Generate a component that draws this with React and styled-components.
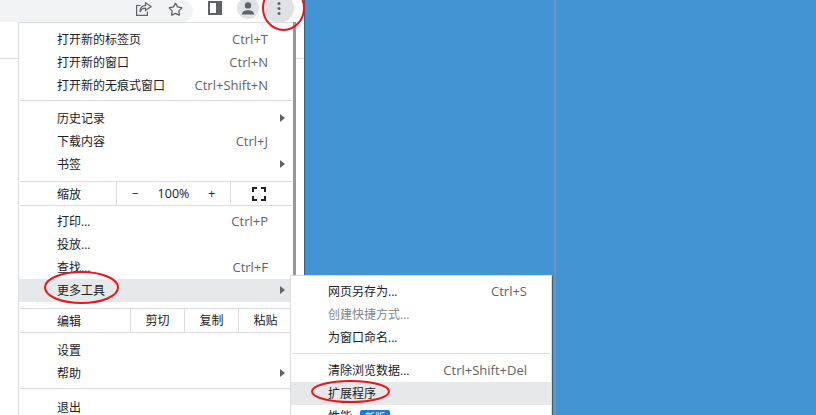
import React from "react";
import styled, { createGlobalStyle } from "styled-components";
import { Star } from "lucide-react";

const GlobalStyle = createGlobalStyle`
  html, body {
    margin: 0;
    padding: 0;
    overflow: hidden;
  }
  body {
    font-family: "Open Sans", "Noto Sans CJK SC", sans-serif;
    font-size: 12px;
    color: #202124;
  }
`;

const Page = styled.div`
  position: relative;
  display: flex;
  width: 816px;
  height: 415px;
  overflow: hidden;
  background: #4394d2;
`;

const BrowserPane = styled.div`
  width: 304px;
  height: 100%;
  flex-shrink: 0;
  background: #fff;
  border-right: 1px solid #3a5f80;
`;

const Toolbar = styled.div`
  display: flex;
  align-items: flex-start;
  height: 58px;
  border-bottom: 1px solid #dadce0;
`;

const Omnibox = styled.div`
  display: flex;
  align-items: center;
  justify-content: flex-end;
  gap: 16px;
  width: 193px;
  height: 22px;
  padding: 0 10px 4px 0;
  box-sizing: border-box;
  background: #f1f3f4;
  border-radius: 0 11px 11px 0;
`;

const ToolIcon = styled.svg`
  display: block;
  flex-shrink: 0;
`;

const ToolButtons = styled.div`
  display: flex;
  align-items: center;
  height: 16px;
  margin-left: 15px;
`;

const SideButton = styled.div`
  margin-right: 15px;
`;

const RoundButton = styled.div`
  display: flex;
  align-items: center;
  justify-content: center;
  flex-shrink: 0;
  width: ${p => p.$size}px;
  height: ${p => p.$size}px;
  margin-right: ${p => p.$gap || 0}px;
  border-radius: 50%;
  background: #dfe1e5;
`;

const BlueArea = styled.div`
  flex: 1;
  display: flex;
`;

const BlueLeft = styled.div`
  width: 249px;
  border-right: 2px solid #6a94b8;
`;

const Menu = styled.div`
  position: absolute;
  left: 18px;
  top: 22px;
  width: 275px;
  height: 400px;
  padding-top: 5px;
  box-sizing: border-box;
  background: #fff;
  border: 1px solid #dadce0;
  border-right: none;
  box-shadow: 3px 0 0 #96989c;
`;

const SubMenu = styled.div`
  position: absolute;
  left: 290px;
  top: 275px;
  width: 262px;
  height: 150px;
  padding-top: 4px;
  box-sizing: border-box;
  background: #fff;
  border: 1px solid #dadce0;
  box-shadow: 1px 1px 0 #3a5f80;
`;

const Row = styled.div`
  display: flex;
  align-items: center;
  justify-content: space-between;
  height: 23px;
  padding: 0 ${p => (p.$inset ? 24 : 25)}px 2px ${p => (p.$inset ? 37 : 38)}px;
  box-sizing: border-box;
  background: ${p => (p.$active ? "#e7e8ea" : "transparent")};
  color: ${p => (p.$muted ? "#80868b" : "#202124")};
  position: relative;
`;

const Shortcut = styled.span`
  color: #5f6368;
  font-size: 13px;
`;

const Caret = styled.span`
  position: absolute;
  right: 8px;
  top: 7px;
  width: 0;
  height: 0;
  border-left: 5px solid #5f6368;
  border-top: 4px solid transparent;
  border-bottom: 4px solid transparent;
`;

const Separator = styled.div`
  height: 1px;
  margin: ${p => p.$before || 0}px 1px ${p => p.$after || 0}px 1px;
  background: #dadce0;
`;

const CellRow = styled.div`
  display: flex;
  align-items: stretch;
  height: 23px;
`;

const CellLabel = styled.div`
  display: flex;
  align-items: center;
  width: ${p => p.$width}px;
  padding-left: 38px;
  box-sizing: border-box;
`;

const Cell = styled.div`
  display: flex;
  align-items: center;
  justify-content: ${p => p.$justify || "center"};
  width: ${p => p.$width}px;
  box-sizing: border-box;
  border-left: 1px solid #dadce0;
  padding: ${p => p.$padding || "0 0 2px"};
`;

const ZoomValue = styled.span`
  font-size: 12.5px;
`;

const Badge = styled.span`
  display: inline-block;
  margin-left: 8px;
  padding: 0 5px;
  height: 15px;
  line-height: 15px;
  font-size: 10px;
  color: #fff;
  background: #1a7ad9;
  border-radius: 2px;
`;

const Oval = styled.svg`
  position: absolute;
  left: ${p => p.$x}px;
  top: ${p => p.$y}px;
  overflow: visible;
  pointer-events: none;
`;

function RedOval({ x, y, w, h }) {
  return (
    <Oval $x={x} $y={y} width={w} height={h}>
      <ellipse cx={w / 2} cy={h / 2} rx={w / 2} ry={h / 2} fill="none" stroke="#e3191f" strokeWidth="2" />
    </Oval>
  );
}

function ShareIcon() {
  return (
    <ToolIcon width="16" height="14" viewBox="0 0 16 14" fill="none" stroke="#5f6368" strokeWidth="1.2">
      <path d="M4.5 3.5H0.6V13.4h10.8V9.5" />
      <path d="M9.5 0.8L15 4.6 9.5 8.4V6.2C7 6.2 5.2 7.2 4 10c0-4 2-6.3 5.5-6.6z" />
    </ToolIcon>
  );
}

function SidePanelIcon() {
  return (
    <ToolIcon width="14" height="14" viewBox="0 0 14 14">
      <rect x="0" y="0" width="14" height="14" fill="#5f6368" />
      <rect x="2" y="2" width="6" height="10" fill="#fff" />
    </ToolIcon>
  );
}

function AvatarIcon() {
  return (
    <ToolIcon width="14" height="13" viewBox="0 0 14 13" fill="#5f6368">
      <circle cx="7" cy="3.4" r="3.2" />
      <path d="M0.8 12.6c0-3 3-4.4 6.2-4.4s6.2 1.4 6.2 4.4z" />
    </ToolIcon>
  );
}

function KebabIcon() {
  return (
    <ToolIcon width="4" height="13" viewBox="0 0 4 13" fill="#5f6368">
      <circle cx="2" cy="1.5" r="1.5" />
      <circle cx="2" cy="6.5" r="1.5" />
      <circle cx="2" cy="11.5" r="1.5" />
    </ToolIcon>
  );
}

function FullscreenIcon() {
  return (
    <ToolIcon width="14" height="14" viewBox="0 0 14 14" fill="none" stroke="#202124" strokeWidth="2">
      <path d="M1 5V1h4M9 1h4v4M13 9v4H9M5 13H1V9" />
    </ToolIcon>
  );
}

export default function App() {
  return (
    <Page>
      <GlobalStyle />
      <BrowserPane>
        <Toolbar>
          <Omnibox>
            <ShareIcon />
            <Star size={15} color="#5f6368" strokeWidth={2} />
          </Omnibox>
          <ToolButtons>
            <SideButton><SidePanelIcon /></SideButton>
            <RoundButton $size={22} $gap={5}><AvatarIcon /></RoundButton>
            <RoundButton $size={30}><KebabIcon /></RoundButton>
          </ToolButtons>
        </Toolbar>
      </BrowserPane>
      <BlueArea>
        <BlueLeft />
      </BlueArea>

      <Menu>
        <Row>打开新的标签页<Shortcut>Ctrl+T</Shortcut></Row>
        <Row>打开新的窗口<Shortcut>Ctrl+N</Shortcut></Row>
        <Row>打开新的无痕式窗口<Shortcut>Ctrl+Shift+N</Shortcut></Row>
        <Separator $before={3} $after={6} />
        <Row>历史记录<Caret /></Row>
        <Row>下载内容<Shortcut>Ctrl+J</Shortcut></Row>
        <Row>书签<Caret /></Row>
        <Separator $before={5} />
        <CellRow>
          <CellLabel $width={97}>缩放</CellLabel>
          <Cell $width={114} $justify="space-between" $padding="0 15px 0">
            <span>−</span><ZoomValue>100%</ZoomValue><span>+</span>
          </Cell>
          <Cell $width={61} $justify="flex-end" $padding="0 25px 0 0"><FullscreenIcon /></Cell>
        </CellRow>
        <Separator $after={4} />
        <Row>打印...<Shortcut>Ctrl+P</Shortcut></Row>
        <Row>投放...</Row>
        <Row>查找...<Shortcut>Ctrl+F</Shortcut></Row>
        <Row $active>更多工具<Caret /></Row>
        <Separator $before={6} />
        <CellRow>
          <CellLabel $width={111}>编辑</CellLabel>
          <Cell $width={54}>剪切</Cell>
          <Cell $width={54}>复制</Cell>
          <Cell $width={54}>粘贴</Cell>
        </CellRow>
        <Separator $after={6} />
        <Row>设置</Row>
        <Row>帮助<Caret /></Row>
        <Separator $before={3} $after={7} />
        <Row>退出</Row>
      </Menu>

      <SubMenu>
        <Row $inset>网页另存为...<Shortcut>Ctrl+S</Shortcut></Row>
        <Row $inset $muted>创建快捷方式...</Row>
        <Row $inset>为窗口命名...</Row>
        <Separator $before={4} $after={5} />
        <Row $inset>清除浏览数据...<Shortcut>Ctrl+Shift+Del</Shortcut></Row>
        <Row $inset $active>扩展程序</Row>
        <Row $inset><span>性能<Badge>新版</Badge></span></Row>
      </SubMenu>

      <RedOval x={263} y={-14} w={41} h={44} />
      <RedOval x={45} y={272} w={73} h={31} />
      <RedOval x={312} y={381} w={77} h={21} />
    </Page>
  );
}
